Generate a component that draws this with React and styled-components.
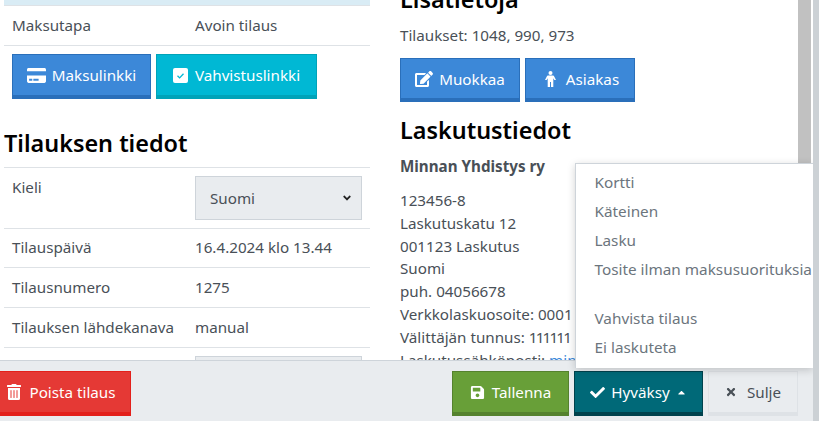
import React from 'react';
import styled, { createGlobalStyle } from 'styled-components';
import { FaCreditCard, FaEdit, FaTrashAlt, FaSave, FaCheck, FaTimes, FaCaretUp, FaAngleDown } from 'react-icons/fa';

const GlobalStyle = createGlobalStyle`
  html, body {
    margin: 0;
    padding: 0;
    height: 421px;
    overflow: hidden;
    background: #ccd1d5;
    font-family: 'Noto Sans', sans-serif;
    font-size: 15.2px;
    color: #495057;
  }
`;

const Modal = styled.div`
  width: 813px;
  height: 421px;
  display: flex;
  flex-direction: column;
  position: relative;
  overflow: hidden;
  background: #fff;
`;

const Body = styled.div`
  height: 360px;
  flex: none;
  display: flex;
  overflow: hidden;
`;

const LeftColumn = styled.div`
  width: 370px;
  padding-left: 4px;
  box-sizing: border-box;
  flex: none;
`;

const Banner = styled.div`
  height: 5px;
  background: #d9ecf5;
  border-bottom: 1px solid #dee2e6;
`;

const Row = styled.div`
  display: flex;
  box-sizing: border-box;
  height: ${p => p.$h || 40}px;
  padding: 0 8px 2px;
  align-items: ${p => (p.$select ? 'flex-start' : 'center')};
  border-bottom: 1px solid #dee2e6;
`;

const RowLabel = styled.div`
  width: 183px;
  flex: none;
  padding-top: ${p => (p.$select ? 9 : 0)}px;
`;

const RowValue = styled.div`
  flex: 1;
`;

const Buttons = styled.div`
  display: flex;
  gap: 5px;
  padding: ${p => p.$pad || '8px 0 0 8px'};
`;

const Button = styled.button`
  height: ${p => p.$h || 45}px;
  width: ${p => p.$w}px;
  margin-left: ${p => p.$ml || 0}px;
  flex: none;
  box-sizing: border-box;
  display: inline-flex;
  align-items: center;
  justify-content: center;
  gap: ${p => p.$gap || 6}px;
  padding: 0;
  font-family: inherit;
  font-size: 15.2px;
  color: ${p => p.$fg || '#fff'};
  background: ${p => p.$bg};
  border: 1px solid ${p => p.$edge};
  border-bottom: 4px solid ${p => p.$edge};
  border-radius: 0;
`;

const SectionTitle = styled.h3`
  margin: ${p => p.$m || 0};
  font-size: 23.4px;
  line-height: 30px;
  font-weight: 600;
  color: #000;
`;

const TitleRule = styled(SectionTitle)`
  padding-bottom: 9px;
  border-bottom: 1px solid #dee2e6;
`;

const Select = styled.div`
  height: 44px;
  width: 167px;
  margin-top: 8px;
  flex: none;
  box-sizing: border-box;
  display: flex;
  align-items: center;
  justify-content: space-between;
  padding: 0 8px 1px 14px;
  background: #e9ecef;
  border: 1px solid #ced4da;
  color: #495057;
`;

const RightColumn = styled.div`
  flex: 1;
  padding-left: 30px;
  min-width: 0;
`;

const CutTitle = styled(SectionTitle)`
  margin-top: -16px;
`;

const Plain = styled.p`
  margin: 10px 0 0;
  line-height: 23px;
`;

const Strong = styled.strong`
  display: block;
  line-height: 23px;
`;

const Address = styled.div`
  margin-top: 11px;
  line-height: 22.8px;
  white-space: nowrap;
`;

const NarrowDigits = styled.span`
  letter-spacing: -1.8px;
`;

const Link = styled.a`
  color: #3b88d8;
`;

const Scrollbar = styled.div`
  flex: none;
  width: 13px;
  margin-right: 2px;
  background: #c1c1c1;
`;

const Footer = styled.div`
  flex: 1;
  box-sizing: border-box;
  background: #e9ecef;
  border-top: 1px solid #ced4da;
  padding: 10px 15px 0 0;
  display: flex;
  gap: 5px;
`;

const Spacer = styled.div`
  flex: 1;
`;

const Menu = styled.div`
  position: absolute;
  left: 575px;
  top: 163px;
  width: 238px;
  height: 205px;
  box-sizing: border-box;
  padding: 4px 0;
  background: #fff;
  border: 1px solid #ced4da;
  border-right: 0;
  border-bottom: 0;
  box-shadow: 0 2px 8px rgba(0, 0, 0, 0.18);
`;

const MenuItem = styled.div`
  height: 29px;
  line-height: 29px;
  padding-left: 18.5px;
  white-space: nowrap;
  color: #6c757d;
  font-size: 15.3px;
`;

const MenuGap = styled.div`
  height: 20px;
`;

const Caret = styled(FaCaretUp)`
  font-size: 11px;
`;

const PersonIcon = styled.svg`
  margin-left: 4px;
`;

const CheckBox = () => (
  <svg width="15" height="15" viewBox="0 0 15 15">
    <rect width="15" height="15" rx="2" fill="#fff" />
    <path d="M4.5 7.8l2.1 2.1 3.9-4.2" fill="none" stroke="#00b8d4" strokeWidth="1.3" />
  </svg>
);

const Person = () => (
  <PersonIcon width="11" height="16" viewBox="0 0 11 16" fill="#fff">
    <circle cx="5.5" cy="2" r="2" />
    <path d="M3 4.6h5c.6 0 1 .3 1.2.8L11 9H9.4L8.3 7.2V16H6V11H5v5H2.7V7.2L1.6 9H0l1.8-3.6c.2-.5.6-.8 1.2-.8z" />
  </PersonIcon>
);

const App = () => (
  <Modal>
    <GlobalStyle />
    <Body>
      <LeftColumn>
        <Banner />
        <Row>
          <RowLabel>Maksutapa</RowLabel>
          <RowValue>Avoin tilaus</RowValue>
        </Row>
        <Buttons>
          <Button $w={139} $bg="#3c88d8" $edge="#2a6fba"><FaCreditCard size={19} />Maksulinkki</Button>
          <Button $w={161} $bg="#00b8d4" $edge="#00a3b8" $gap={7}><CheckBox />Vahvistuslinkki</Button>
        </Buttons>
        <TitleRule $m="29px 0 0">Tilauksen tiedot</TitleRule>
        <Row $h={61} $select>
          <RowLabel $select>Kieli</RowLabel>
          <Select>Suomi<FaAngleDown size={12} color="#222" /></Select>
        </Row>
        <Row $h={39}>
          <RowLabel>Tilauspäivä</RowLabel>
          <RowValue>16.4.2024 klo 13.44</RowValue>
        </Row>
        <Row>
          <RowLabel>Tilausnumero</RowLabel>
          <RowValue>1275</RowValue>
        </Row>
        <Row>
          <RowLabel>Tilauksen lähdekanava</RowLabel>
          <RowValue>manual</RowValue>
        </Row>
        <Row $h={60} $select>
          <RowLabel $select />
          <Select />
        </Row>
      </LeftColumn>
      <RightColumn>
        <CutTitle>Lisätietoja</CutTitle>
        <Plain>Tilaukset: 1048, 990, 973</Plain>
        <Buttons $pad="11px 0 0 0">
          <Button $w={120} $h={44} $bg="#3c88d8" $edge="#2a6fba"><FaEdit size={18} />Muokkaa</Button>
          <Button $w={110} $h={44} $bg="#3c88d8" $edge="#2a6fba" $gap={10}><Person />Asiakas</Button>
        </Buttons>
        <SectionTitle $m="13px 0 10px">Laskutustiedot</SectionTitle>
        <Strong>Minnan Yhdistys ry</Strong>
        <Address>
          123456-8<br />
          Laskutuskatu 12<br />
          001123 Laskutus<br />
          Suomi<br />
          puh. 04056678<br />
          Verkkolaskuosoite: 0001<br />
          Välittäjän tunnus: <NarrowDigits>111111</NarrowDigits><br />
          Laskutussähköposti: <Link>min</Link>
        </Address>
      </RightColumn>
      <Scrollbar />
    </Body>
    <Footer>
      <Button $w={140} $ml={-9} $bg="#e53935" $edge="#e3201b" $gap={7}><FaTrashAlt size={16} />Poista tilaus</Button>
      <Spacer />
      <Button $w={117} $bg="#689f38" $edge="#55822e" $gap={7}><FaSave size={15} />Tallenna</Button>
      <Button $w={129} $bg="#006978" $edge="#00424d"><FaCheck size={15} />Hyväksy<Caret /></Button>
      <Button $w={90} $bg="#e9ecef" $edge="#dee2e6" $fg="#495057" $gap={10}><FaTimes size={12} />Sulje</Button>
    </Footer>
    <Menu>
      <MenuItem>Kortti</MenuItem>
      <MenuItem>Käteinen</MenuItem>
      <MenuItem>Lasku</MenuItem>
      <MenuItem>Tosite ilman maksusuorituksia</MenuItem>
      <MenuGap />
      <MenuItem>Vahvista tilaus</MenuItem>
      <MenuItem>Ei laskuteta</MenuItem>
    </Menu>
  </Modal>
);

export default App;
